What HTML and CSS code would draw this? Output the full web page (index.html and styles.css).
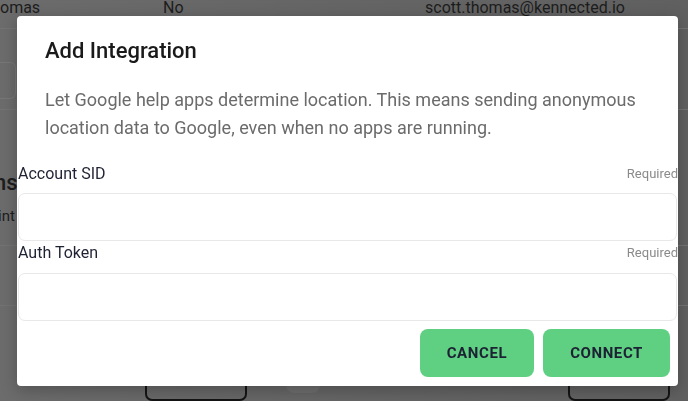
FILE: index.html
```html
<!DOCTYPE html>
<html>
<head>
<meta charset="utf-8">
<link rel="stylesheet" href="styles.css">
</head>
<body>
<div class="page">
  <div class="row top-row">
    <span class="cell c1">omas</span>
    <span class="cell c2">No</span>
    <span class="cell c3">scott.thomas@kennected.io</span>
  </div>
  <div class="divider d1"></div>
  <div class="ghost-box"></div>
  <div class="divider d2"></div>
  <div class="section-title">ns</div>
  <div class="section-sub">int</div>
  <div class="divider d3"></div>
  <div class="divider d4"></div>
  <div class="bottom-row">
    <div class="ghost-btn b1"></div>
    <div class="vline"></div>
    <div class="vline v2"></div>
    <div class="ghost-icon"></div>
    <div class="spacer"></div>
    <div class="ghost-btn b2"></div>
  </div>
</div>

<div class="modal">
  <h2 class="modal-title">Add Integration</h2>
  <p class="modal-text">Let Google help apps determine location. This means sending anonymous location data to Google, even when no apps are running.</p>
  <div class="form">
    <div class="field">
      <div class="label-row"><span class="label">Account SID</span><span class="req">Required</span></div>
      <div class="input"></div>
    </div>
    <div class="field">
      <div class="label-row"><span class="label">Auth Token</span><span class="req">Required</span></div>
      <div class="input"></div>
    </div>
  </div>
  <div class="actions">
    <button class="btn">CANCEL</button>
    <button class="btn">CONNECT</button>
  </div>
</div>
</body>
</html>
```

FILE: styles.css
```css
* { box-sizing: border-box; }
html, body { margin: 0; padding: 0; }
body {
  width: 688px;
  height: 401px;
  overflow: hidden;
  background: #666666;
  font-family: Roboto, "Liberation Sans", sans-serif;
}
.page {
  height: 401px;
  display: flex;
  flex-direction: column;
  background: linear-gradient(90deg, #6c6c6c 0%, #656565 50%, #606060 100%);
}
.row { display: flex; }
.top-row {
  margin-top: 0;
  height: 31px;
  font-size: 16px;
  line-height: 16px;
  color: #1d1d1d;
}
.cell { display: block; }
.c1 { width: 163px; }
.c2 { width: 262px; }
.divider { height: 1px; background: #737373; }
.d1 { margin-top: 4px; }
.ghost-box {
  margin-top: 34px;
  width: 16px;
  height: 47px;
  border: 1px solid #777;
  border-left: none;
  border-radius: 0 6px 6px 0;
}
.d2 { margin-top: 10px; }
.section-title {
  margin-top: 61px;
  font-size: 22px;
  font-weight: 500;
  line-height: 26px;
  color: #1d1d1d;
  margin-left: -6px;
}
.section-sub {
  margin-top: 9px;
  font-size: 15px;
  line-height: 22px;
  color: #1d1d1d;
  margin-left: -2px;
}
.d3 { margin-top: 18px; }
.d4 { margin-top: 59px; }
.bottom-row {
  margin-top: 55px;
  display: flex;
  align-items: flex-start;
  padding-left: 145px;
  padding-right: 18px;
}
.ghost-btn {
  width: 102px;
  height: 40px;
  border: 2px solid #141414;
  border-radius: 7px;
}
.vline { width: 1px; height: 20px; background: #707070; margin-left: 10px; margin-top: -4px; }
.v2 { margin-left: 18px; }
.ghost-icon {
  margin-left: 9px;
  margin-top: 2px;
  width: 34px;
  height: 30px;
  border-radius: 8px;
  background: #6e6e6e;
  position: relative;
}
.ghost-icon::after {
  content: "";
  position: absolute;
  left: 8px;
  top: 8px;
  width: 6px;
  height: 6px;
  border-radius: 50%;
  background: #3d7d78;
}
.spacer { flex: 1; }

.modal {
  position: fixed;
  left: 17px;
  top: 16px;
  width: 661px;
  height: 370px;
  background: #ffffff;
  border-radius: 4px;
  box-shadow: 0 4px 16px rgba(0,0,0,0.25);
  display: flex;
  flex-direction: column;
}
.modal-title {
  margin: 0;
  padding: 21px 28px 0;
  font-size: 22px;
  font-weight: 500;
  line-height: 28px;
  color: #1a1a1a;
}
.modal-text {
  margin: 21px 0 0;
  padding: 0 28px;
  font-size: 18px;
  line-height: 28px;
  color: #6b6b6b;
}
.form {
  margin-top: 20px;
  display: flex;
  flex-direction: column;
}
.field { display: flex; flex-direction: column; }
.label-row {
  display: flex;
  justify-content: space-between;
  align-items: center;
  height: 22px;
  margin-bottom: 9px;
  padding-left: 1px;
}
.field + .field .label-row { margin-top: 0; margin-bottom: 10px; }
.label { font-size: 16px; color: #1f2233; }
.req { font-size: 13px; color: #8a8a8a; }
.input {
  margin-left: 1px;
  margin-right: 1px;
  height: 48px;
  border: 1px solid #e8e8e8;
  border-radius: 7px;
}
.actions {
  margin-top: 8px;
  display: flex;
  justify-content: flex-end;
  gap: 9px;
  padding-right: 8px;
}
.btn {
  height: 48px;
  padding: 0 27px;
  border: none;
  border-radius: 8px;
  background: #5fcf82;
  color: #1c2133;
  font-family: Roboto, "Liberation Sans", sans-serif;
  font-size: 15px;
  font-weight: 700;
  letter-spacing: 0.6px;
}
```
